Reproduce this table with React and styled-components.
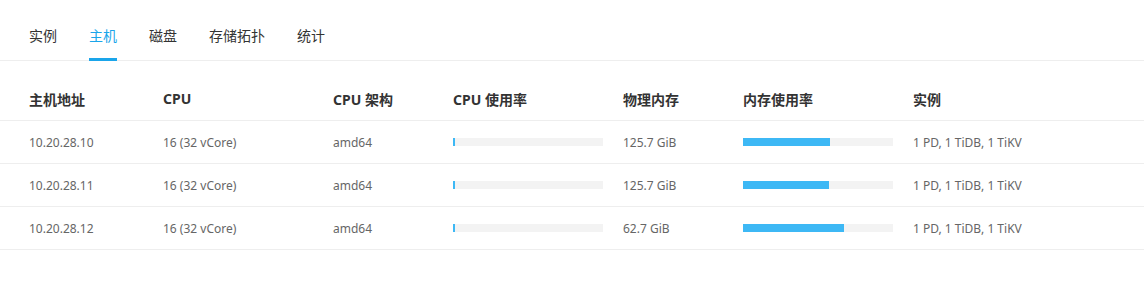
import React, {useState} from 'react';
import styled, {createGlobalStyle} from "styled-components";

const tabs = ['实例', '主机', '磁盘', '存储拓扑', '统计'];

const columns = ['主机地址', 'CPU', 'CPU 架构', 'CPU 使用率', '物理内存', '内存使用率', '实例'];

const hosts = [
    {ip: '10.20.28.10', cpu: '16 (32 vCore)', arch: 'amd64', cpuUsage: 1.3, memory: '125.7 GiB', memUsage: 58, instances: '1 PD, 1 TiDB, 1 TiKV'},
    {ip: '10.20.28.11', cpu: '16 (32 vCore)', arch: 'amd64', cpuUsage: 1.3, memory: '125.7 GiB', memUsage: 57.4, instances: '1 PD, 1 TiDB, 1 TiKV'},
    {ip: '10.20.28.12', cpu: '16 (32 vCore)', arch: 'amd64', cpuUsage: 1.3, memory: '62.7 GiB', memUsage: 67.4, instances: '1 PD, 1 TiDB, 1 TiKV'},
];

const HostsPage = () => {
    const [activeTab, setActiveTab] = useState('主机');

    return (
        <Page>
            <GlobalStyle/>
            <TabBar>
                {tabs.map(tab => (
                    <Tab key={tab} $active={tab === activeTab} onClick={() => setActiveTab(tab)}>
                        {tab}
                    </Tab>
                ))}
            </TabBar>

            <Table>
                <HeaderRow>
                    {columns.map(col => <HeaderCell key={col}>{col}</HeaderCell>)}
                </HeaderRow>
                {hosts.map(host => (
                    <Row key={host.ip}>
                        <Cell>{host.ip}</Cell>
                        <Cell>{host.cpu}</Cell>
                        <Cell>{host.arch}</Cell>
                        <Cell>
                            <Bar>
                                <BarFill style={{width: `${host.cpuUsage}%`}}/>
                            </Bar>
                        </Cell>
                        <Cell>{host.memory}</Cell>
                        <Cell>
                            <Bar>
                                <BarFill style={{width: `${host.memUsage}%`}}/>
                            </Bar>
                        </Cell>
                        <Cell>{host.instances}</Cell>
                    </Row>
                ))}
            </Table>
        </Page>
    );
};

export default HostsPage;


const GlobalStyle = createGlobalStyle`
  body {
    margin: 0;
    background: #fff;
    font-family: "Noto Sans", "Noto Sans CJK SC", sans-serif;
  }
`;

const Page = styled.div`
  width: 100%;
`;

const TabBar = styled.nav`
  display: flex;
  gap: 32px;
  height: 60px;
  padding-left: 29px;
  border-bottom: 1px solid #eeeeee;
`;

const Tab = styled.div`
  position: relative;
  padding-top: 26px;
  font-size: 14px;
  line-height: 20px;
  color: ${({$active}) => $active ? '#1aa5ea' : '#333'};
  cursor: pointer;

  &::after {
    content: '';
    display: ${({$active}) => $active ? 'block' : 'none'};
    position: absolute;
    left: 0;
    right: 0;
    bottom: -1px;
    height: 3px;
    background: #1aa5ea;
  }
`;

const Table = styled.div`
  margin-top: 16px;
`;

const Row = styled.div`
  display: grid;
  grid-template-columns: 134px 170px 120px 170px 120px 170px 1fr;
  align-items: center;
  height: 42px;
  padding-left: 29px;
  border-bottom: 1px solid #eeeeee;
`;

const HeaderRow = styled(Row)`
  height: 43px;
`;

const HeaderCell = styled.div`
  font-size: 14px;
  font-weight: 700;
  color: #333;
`;

const Cell = styled.div`
  font-size: 12px;
  color: #666;
`;

const Bar = styled.div`
  width: 150px;
  height: 8px;
  background: #f3f3f3;
`;

const BarFill = styled.div`
  height: 100%;
  background: #3db8f5;
`;
